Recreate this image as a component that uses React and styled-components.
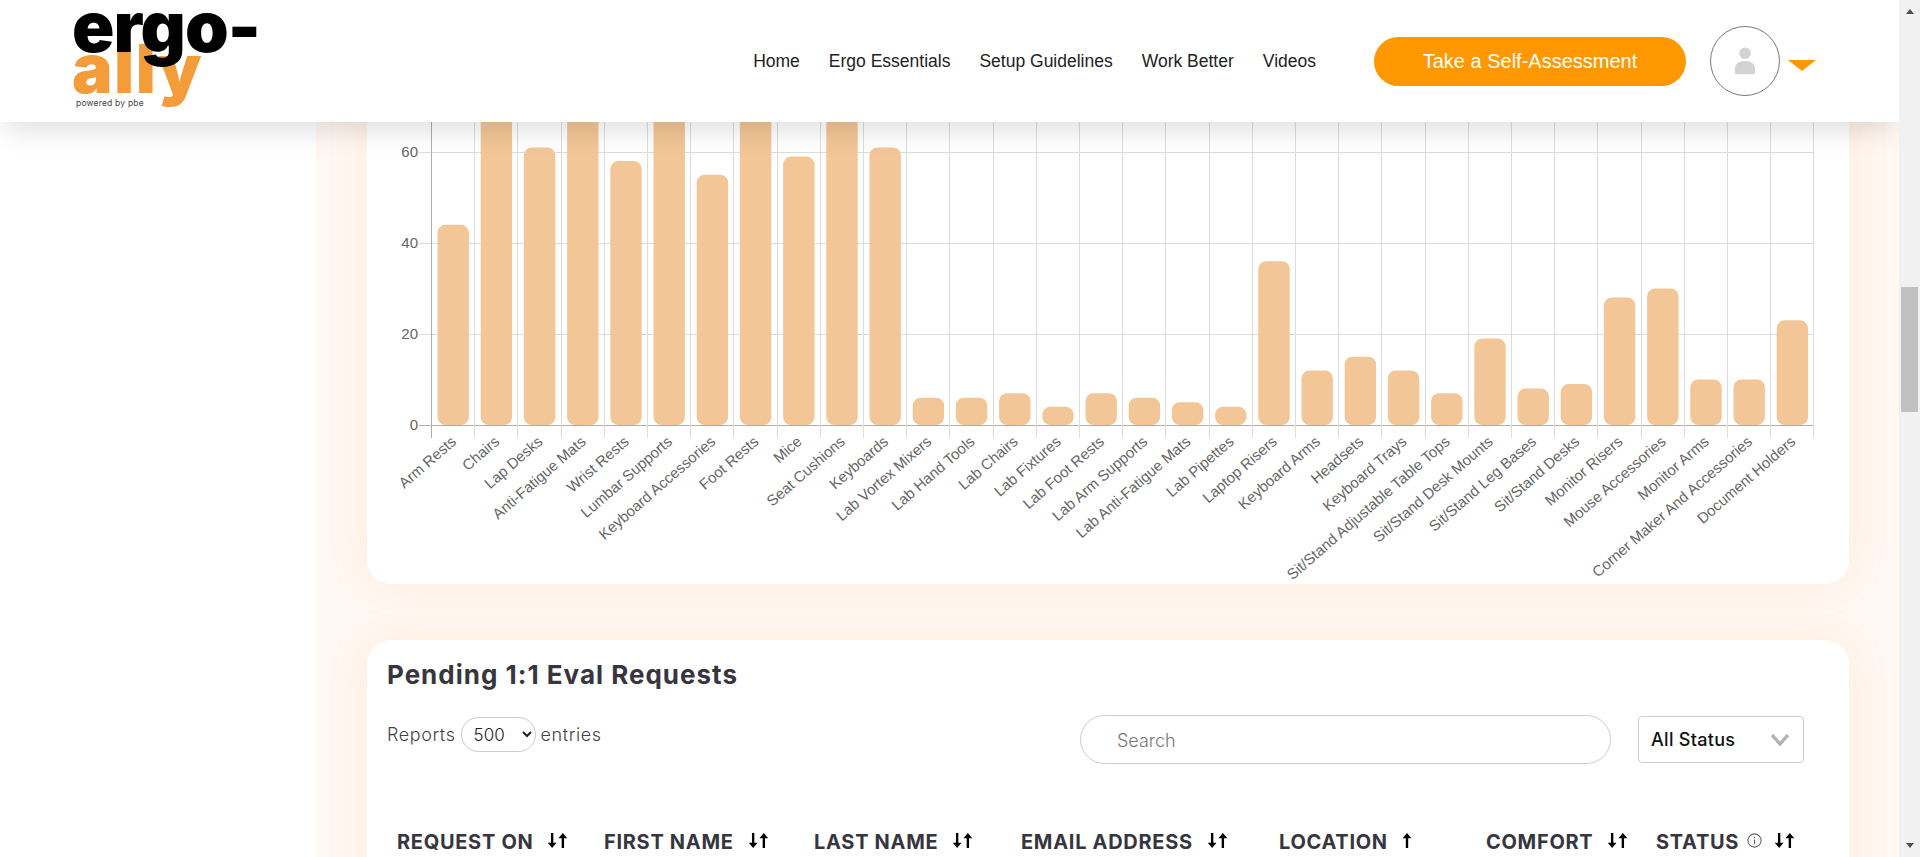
import styled, { createGlobalStyle } from 'styled-components';

const SANS = '"Liberation Sans", Arial, sans-serif';
const ROUND = 'Inter, "Open Sans", sans-serif';

const bars = [
  ['Arm Rests', 44], ['Chairs', 85], ['Lap Desks', 61], ['Anti-Fatigue Mats', 85],
  ['Wrist Rests', 58], ['Lumbar Supports', 85], ['Keyboard Accessories', 55], ['Foot Rests', 85],
  ['Mice', 59], ['Seat Cushions', 85], ['Keyboards', 61], ['Lab Vortex Mixers', 6],
  ['Lab Hand Tools', 6], ['Lab Chairs', 7], ['Lab Fixtures', 4], ['Lab Foot Rests', 7],
  ['Lab Arm Supports', 6], ['Lab Anti-Fatigue Mats', 5], ['Lab Pipettes', 4], ['Laptop Risers', 36],
  ['Keyboard Arms', 12], ['Headsets', 15], ['Keyboard Trays', 12], ['Sit/Stand Adjustable Table Tops', 7],
  ['Sit/Stand Desk Mounts', 19], ['Sit/Stand Leg Bases', 8], ['Sit/Stand Desks', 9], ['Monitor Risers', 28],
  ['Mouse Accessories', 30], ['Monitor Arms', 10], ['Corner Maker And Accessories', 10], ['Document Holders', 23],
];

const navLinks = ['Home', 'Ergo Essentials', 'Setup Guidelines', 'Work Better', 'Videos'];

const columns = [
  { label: 'REQUEST ON', sort: 'both' },
  { label: 'FIRST NAME', sort: 'both' },
  { label: 'LAST NAME', sort: 'both' },
  { label: 'EMAIL ADDRESS', sort: 'both' },
  { label: 'LOCATION', sort: 'up' },
  { label: 'COMFORT', sort: 'both' },
  { label: 'STATUS', sort: 'both', info: true },
];

const AXIS_X = 64;
const BAND = 43.2;
const ZERO_Y = 425;
const UNIT = 4.55;

const BarChart = () => {
  const right = AXIS_X + BAND * bars.length;
  return (
    <ChartSvg viewBox="0 0 1482 584">
      {[0, 20, 40, 60, 80].map((v) => (
        <g key={v}>
          <line
            x1={AXIS_X - 12}
            x2={right}
            y1={Math.round(ZERO_Y - v * UNIT) + 0.5}
            y2={Math.round(ZERO_Y - v * UNIT) + 0.5}
            stroke={v === 0 ? '#adadad' : '#dcdcdc'}
          />
          <AxisText x={AXIS_X - 13} y={ZERO_Y - v * UNIT + 5} textAnchor="end">
            {v}
          </AxisText>
        </g>
      ))}
      {bars.map((_, i) => {
        const x = Math.round(AXIS_X + BAND * (i + 1)) + 0.5;
        return <line key={i} x1={x} x2={x} y1={0} y2={ZERO_Y + 13} stroke="#dcdcdc" />;
      })}
      <line x1={AXIS_X + 0.5} x2={AXIS_X + 0.5} y1={0} y2={ZERO_Y + 13} stroke="#adadad" />
      {bars.map(([name, value], i) => {
        const center = AXIS_X + BAND * (i + 0.5) + 0.6;
        return (
          <g key={name}>
            <rect
              x={center - 15.7}
              y={ZERO_Y - value * UNIT}
              width={31.4}
              height={value * UNIT}
              rx={8}
              fill="#f2c696"
            />
            <AxisText
              x={center + 4}
              y={ZERO_Y + 18}
              textAnchor="end"
              transform={`rotate(-41 ${center + 4} ${ZERO_Y + 18})`}
            >
              {name}
            </AxisText>
          </g>
        );
      })}
    </ChartSvg>
  );
};

const SortIcon = ({ type }) =>
  type === 'both' ? (
    <SortSvg viewBox="0 0 19 14">
      <path d="M3.4 0h2.2v9H8.6L4.5 14 .4 9h3z" fill="#000" />
      <path d="M13.4 14h2.2V5h3L14.5 0l-4.1 5h3z" fill="#000" />
    </SortSvg>
  ) : (
    <SortSvg viewBox="0 0 9 14" $narrow>
      <path d="M3.4 14h2.2V5h3L4.5 0 .4 5h3z" fill="#000" />
    </SortSvg>
  );

const InfoIcon = () => (
  <InfoSvg viewBox="0 0 14 14">
    <circle cx="7" cy="7" r="6.2" fill="none" stroke="#666" strokeWidth="1" />
    <path d="M7 6v4.4M7 3.6v1.2" stroke="#666" strokeWidth="1.1" fill="none" />
  </InfoSvg>
);

const App = () => {
  return (
    <>
      <GlobalStyle />
      <Page>
        <Viewport>
          <Header>
            <Logo>
              <LogoAlly>ally</LogoAlly>
              <LogoErgo>ergo-</LogoErgo>
              <LogoTag>powered by pbe</LogoTag>
            </Logo>
            <Nav>
              {navLinks.map((link) => (
                <NavLink key={link} href="#">
                  {link}
                </NavLink>
              ))}
            </Nav>
            <AssessButton>Take a Self-Assessment</AssessButton>
            <Avatar>
              <svg width="26" height="36" viewBox="0 0 26 36">
                <circle cx="13" cy="8" r="7.5" fill="#d3d3d3" />
                <path d="M1 35c-1-1-1-3-1-6 0-8 6-11 13-11s13 3 13 11c0 3 0 5-1 6z" fill="#d3d3d3" />
              </svg>
            </Avatar>
            <Caret />
          </Header>
          <Sidebar />
          <Main>
            <ChartCard>
              <BarChart />
            </ChartCard>
            <TableCard>
              <CardTitle>Pending 1:1 Eval Requests</CardTitle>
              <Toolbar>
                <EntriesLabel>
                  Reports
                  <EntriesSelect defaultValue="500">
                    <option value="500">500</option>
                  </EntriesSelect>
                  entries
                </EntriesLabel>
                <SearchInput placeholder="Search" />
                <StatusFilter>
                  All Status
                  <svg width="18" height="12" viewBox="0 0 18 12">
                    <path d="M1 1l8 9 8-9" fill="none" stroke="#b4b4b4" strokeWidth="3.4" />
                  </svg>
                </StatusFilter>
              </Toolbar>
              <HeadRow>
                {columns.map((col) => (
                  <HeadCell key={col.label}>
                    {col.label}
                    {col.info && <InfoIcon />}
                    <SortIcon type={col.sort} />
                  </HeadCell>
                ))}
              </HeadRow>
            </TableCard>
          </Main>
        </Viewport>
        <Scrollbar>
          <ScrollArrow />
          <ScrollThumb />
          <ScrollArrow $down />
        </Scrollbar>
      </Page>
    </>
  );
};

export default App;

const GlobalStyle = createGlobalStyle`
  html, body {
    margin: 0;
    padding: 0;
    height: 100%;
    overflow: hidden;
    background: #fff;
  }
  * {
    box-sizing: border-box;
  }
`;

const Page = styled.div`
  display: flex;
  width: 100%;
  height: 100vh;
  overflow: hidden;
`;

const Viewport = styled.div`
  position: relative;
  display: flex;
  flex: 1;
  min-width: 0;
  overflow: hidden;
`;

const Header = styled.header`
  position: absolute;
  top: 0;
  left: 0;
  right: 0;
  z-index: 5;
  height: 122px;
  display: flex;
  align-items: center;
  padding: 0 83px 0 72px;
  background: #fff;
  box-shadow: 0 14px 26px -6px rgba(0, 0, 0, 0.13);
`;

const Logo = styled.div`
  position: relative;
  width: 200px;
  height: 122px;
  flex-shrink: 0;
`;

const LogoErgo = styled.span`
  position: absolute;
  left: 0;
  top: 2px;
  font-family: ${ROUND};
  font-size: 70px;
  font-weight: 900;
  line-height: 50px;
  letter-spacing: -1px;
  color: #000;
`;

const LogoAlly = styled.span`
  position: absolute;
  left: 0;
  top: 43px;
  font-family: ${ROUND};
  font-size: 68px;
  font-weight: 900;
  line-height: 50px;
  letter-spacing: 1.5px;
  color: #f39c39;
`;

const LogoTag = styled.span`
  position: absolute;
  left: 4px;
  top: 97px;
  font-family: ${ROUND};
  font-size: 8.5px;
  line-height: 12px;
  letter-spacing: 0.2px;
  color: #444;
  white-space: nowrap;
`;

const Nav = styled.nav`
  display: flex;
  gap: 29px;
  margin-left: auto;
  margin-right: 58px;
`;

const NavLink = styled.a`
  font-family: ${SANS};
  font-size: 17.5px;
  color: #222;
  text-decoration: none;
`;

const AssessButton = styled.button`
  width: 312px;
  height: 49px;
  border: 0;
  border-radius: 25px;
  background: #ff9800;
  color: #fff;
  font-family: ${SANS};
  font-size: 20px;
`;

const Avatar = styled.div`
  width: 70px;
  height: 70px;
  margin-left: 24px;
  display: flex;
  align-items: center;
  justify-content: center;
  border: 1px solid #777;
  border-radius: 50%;
  svg {
    width: 26px;
    height: 28px;
  }
`;

const Caret = styled.span`
  width: 0;
  height: 0;
  margin: 8px 0 0 8px;
  border-left: 14px solid transparent;
  border-right: 14px solid transparent;
  border-top: 11px solid #ff9800;
`;

const Sidebar = styled.aside`
  width: 316px;
  flex-shrink: 0;
  background: #fff;
`;

const Main = styled.main`
  flex: 1;
  min-width: 0;
  display: flex;
  flex-direction: column;
  gap: 56px;
  padding: 0 50px 0 51px;
  background: #fff7f1;
`;

const Card = styled.section`
  background: #fff;
  border-radius: 24px;
  box-shadow: 0 0 40px rgba(255, 170, 80, 0.12);
`;

const ChartCard = styled(Card)`
  height: 584px;
  flex-shrink: 0;
  border-radius: 0 0 24px 24px;
`;

const ChartSvg = styled.svg`
  display: block;
  width: 1482px;
  height: 584px;
`;

const AxisText = styled.text`
  font-family: ${SANS};
  font-size: 15px;
  fill: #666;
`;

const TableCard = styled(Card)`
  flex-shrink: 0;
  height: 400px;
  padding: 18px 45px 0 20px;
`;

const CardTitle = styled.h2`
  margin: 0 0 23px;
  font-family: ${ROUND};
  font-size: 26px;
  font-weight: 700;
  line-height: 34px;
  letter-spacing: 1px;
  color: #373640;
`;

const Toolbar = styled.div`
  display: flex;
  align-items: flex-start;
  gap: 27px;
`;

const EntriesLabel = styled.label`
  display: flex;
  align-items: center;
  gap: 5px;
  margin-top: 2px;
  margin-right: auto;
  font-family: ${ROUND};
  font-size: 18px;
  font-weight: 300;
  letter-spacing: 0.6px;
  color: #444;
`;

const EntriesSelect = styled.select`
  width: 75px;
  height: 35px;
  padding-left: 8px;
  border: 1px solid #ccc;
  border-radius: 18px;
  background: #fff;
  font-family: ${ROUND};
  font-size: 17px;
  font-weight: 300;
  color: #222;
`;

const SearchInput = styled.input`
  width: 531px;
  height: 49px;
  padding: 2px 36px 0;
  border: 1px solid #ccc;
  border-radius: 25px;
  outline: none;
  font-family: ${ROUND};
  font-size: 18px;
  font-weight: 300;
  &::placeholder {
    color: #777;
  }
`;

const StatusFilter = styled.div`
  width: 166px;
  height: 47px;
  margin-top: 1px;
  display: flex;
  align-items: center;
  justify-content: space-between;
  padding: 0 14px 0 12px;
  border: 1px solid #ccc;
  border-radius: 4px;
  font-family: ${ROUND};
  font-size: 18px;
  font-weight: 500;
  letter-spacing: 0.3px;
  color: #111;
`;

const HeadRow = styled.div`
  display: grid;
  grid-template-columns: 207px 210px 207px 258px 207px 170px 1fr;
  margin-top: 63px;
  padding-left: 10px;
`;

const HeadCell = styled.div`
  display: flex;
  align-items: center;
  height: 30px;
  font-family: ${ROUND};
  font-size: 20px;
  font-weight: 700;
  letter-spacing: 0.7px;
  color: #373640;
  white-space: nowrap;
`;

const SortSvg = styled.svg`
  width: ${(props) => (props.$narrow ? 10 : 21)}px;
  height: 15px;
  margin: -4px 0 0 14px;
`;

const InfoSvg = styled.svg`
  width: 15px;
  height: 15px;
  margin: -4px -2px 0 8px;
`;

const Scrollbar = styled.div`
  width: 21px;
  flex-shrink: 0;
  display: flex;
  flex-direction: column;
  align-items: center;
  background: #f1f1f1;
  padding: 9px 0;
`;

const ScrollArrow = styled.span`
  width: 0;
  height: 0;
  border-left: 4.5px solid transparent;
  border-right: 4.5px solid transparent;
  ${(props) =>
    props.$down
      ? 'border-top: 5px solid #505050; margin-top: auto; margin-bottom: 0;'
      : 'border-bottom: 5px solid #505050;'}
`;

const ScrollThumb = styled.div`
  width: 17px;
  height: 125px;
  margin-top: 273px;
  background: #c1c1c1;
`;
